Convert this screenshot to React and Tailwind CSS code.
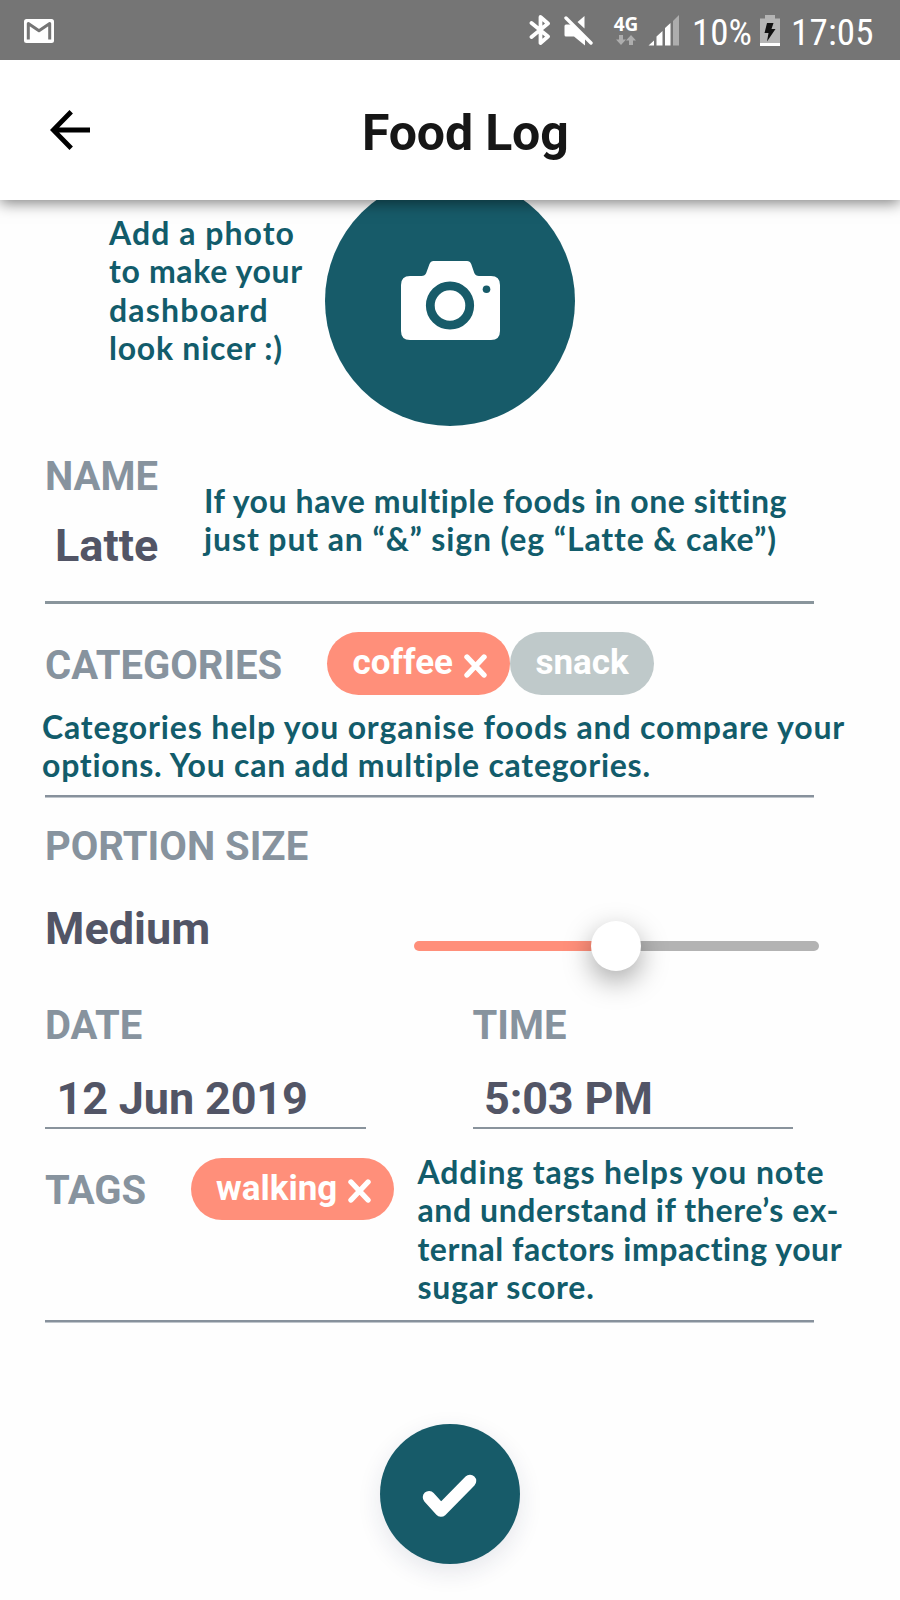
function GmailIcon() {
  return (
    <svg className="h-6 w-[30px] shrink-0" viewBox="0 0 30 24">
      <rect width="30" height="24" rx="2.5" fill="#fff" />
      <path d="M4.3 20.5V4.5L15 11.8L25.7 4.5V20.5" fill="none" stroke="#757575" strokeWidth="3" strokeLinejoin="round" />
    </svg>
  );
}

function BluetoothIcon() {
  return (
    <svg className="h-8 w-[22px] shrink-0" viewBox="0 0 22 32">
      <path d="M2.5 9L19 22.5L11.5 29V3L19 9.5L2.5 23" fill="none" stroke="#fff" strokeWidth="3.8" strokeLinecap="round" strokeLinejoin="round" />
    </svg>
  );
}

function MuteIcon() {
  return (
    <svg className="h-[31px] w-[29px] shrink-0" viewBox="0 0 29 31">
      <path d="M13.5 7L20.5 1V13.5Z" fill="#fff" />
      <path d="M2 3L27 28" stroke="#757575" strokeWidth="6" />
      <path d="M8 9.5L21 22.5V30.5L10 21.5H2Q0.5 21.5 0.5 20V11Q0.5 9.5 2 9.5Z" fill="#fff" />
      <path d="M2 3L27 28" stroke="#fff" strokeWidth="3.4" strokeLinecap="round" />
    </svg>
  );
}

function DataArrows() {
  return (
    <svg className="h-[10px] w-5" viewBox="0 0 20 10">
      <path d="M3 0H7V4.5H10L5 10L0 4.5H3ZM13 10H17V5.5H20L15 0L10 5.5H13Z" fill="#adadad" />
    </svg>
  );
}

function SignalIcon() {
  return (
    <svg className="h-[31px] w-8 shrink-0" viewBox="0 0 32 31">
      <path d="M0.5 30.5L6 25.5V30.5ZM8.5 30.5V21.5L14.5 16V30.5ZM17 30.5V13L22.5 8V30.5Z" fill="#fff" />
      <path d="M25 30.5V6L31 0V30.5Z" fill="#adadad" />
    </svg>
  );
}

function BatteryIcon() {
  return (
    <svg className="h-[31px] w-5 shrink-0" viewBox="0 0 20 31">
      <path d="M5 0H15V3.5H20V28H0V3.5H5Z" fill="#b4b4b4" />
      <path d="M0 28H20V31H0Z" fill="#fff" />
      <path d="M7 8H13.5L11.5 14H15.5L7 26.5L8.5 18H4.5Z" fill="#111" />
    </svg>
  );
}

function CameraIcon() {
  return (
    <svg className="h-[79px] w-[99px]" viewBox="0 0 99 79">
      <path
        d="M9 15H20.5Q24 15 25.2 12L28.5 3Q29.7 0 32.5 0H66Q69 0 70.2 3L73.3 12Q74.5 15 78 15H90Q99 15 99 24V70Q99 79 90 79H9Q0 79 0 70V24Q0 15 9 15Z"
        fill="#fff"
      />
      <circle cx="49" cy="44.5" r="19.7" fill="none" stroke="#175b69" strokeWidth="8.8" />
      <circle cx="85.5" cy="28.3" r="3.8" fill="#175b69" />
    </svg>
  );
}

function Label({ children, className = "" }) {
  return (
    <div className={"h-12 shrink-0 text-[40px] leading-[50px] font-bold whitespace-nowrap text-[#87939e] " + className}>
      {children}
    </div>
  );
}

function Value({ children, className = "" }) {
  return (
    <div className={"h-[52px] text-[45px] leading-[52px] font-bold whitespace-nowrap text-[#525566] " + className}>
      {children}
    </div>
  );
}

function Note({ lines, className = "" }) {
  return (
    <div className={"shrink-0 font-[Lato,sans-serif] text-[32px] leading-[38.3px] font-bold whitespace-nowrap text-[#125c6b] " + className}>
      {lines.map(([text, tracking]) => (
        <div key={text} className={tracking}>{text}</div>
      ))}
    </div>
  );
}

function Chip({ children, removable, className = "" }) {
  return (
    <div className={"flex h-[62.5px] shrink-0 items-center rounded-full pl-[25.5px] text-[35px] leading-[62px] font-bold whitespace-nowrap text-white " + className}>
      {children}
      {removable && (
        <svg className="mt-[5px] ml-[11px] h-6 w-[23px] shrink-0" viewBox="0 0 23 24">
          <path d="M3 3L20 21M20 3L3 21" stroke="#fff" strokeWidth="5.4" strokeLinecap="round" />
        </svg>
      )}
    </div>
  );
}

export default function App() {
  return (
    <div className="flex h-[1600px] w-[900px] flex-col overflow-hidden bg-[#fefefe] font-[Roboto,sans-serif]">
      <div className="relative z-20 flex h-[60px] shrink-0 items-center bg-[#757575] pr-[27px] pl-6 text-white">
        <div className="flex-1 pt-[2px]"><GmailIcon /></div>
        <BluetoothIcon />
        <div className="ml-[13px]"><MuteIcon /></div>
        <div className="ml-[20px] flex w-[26px] flex-col items-center">
          <div className="font-['Open_Sans',sans-serif] text-[19px] leading-[18px] font-bold">4G</div>
          <div className="mt-[2px] flex"><DataArrows /></div>
        </div>
        <div className="ml-[9px]"><SignalIcon /></div>
        <div className="ml-[12px] w-[60px] pt-[5px] font-['Roboto_Condensed',Roboto,sans-serif] text-[37px] leading-10">10%</div>
        <div className="ml-[8px]"><BatteryIcon /></div>
        <div className="ml-[11px] w-[82px] pt-[5px] font-['Roboto_Condensed',Roboto,sans-serif] text-[37px] leading-10 tracking-[0.2px]">17:05</div>
      </div>

      <header className="relative z-10 flex h-[140px] shrink-0 items-start bg-white shadow-[0_3px_14px_rgba(0,0,0,0.5)]">
        <svg className="mt-[50px] ml-[50px] h-10 w-10" viewBox="0 0 40 40">
          <path d="M40 20H4M21.2 1.8L3.3 20L21.2 38.2" fill="none" stroke="#000" strokeWidth="4.8" />
        </svg>
        <h1 className="mt-[43px] ml-[272px] text-[50px] leading-[60px] font-bold tracking-[-0.15px] text-[#161616]">Food Log</h1>
      </header>

      <main className="flex flex-col">
        <section className="flex h-[226px] items-start">
          <Note
            className="mt-[14.2px] ml-[109px] w-[216px]"
            lines={[
              ["Add a photo", "tracking-[1.05px]"],
              ["to make your", "tracking-[0.65px]"],
              ["dashboard", "tracking-[1.2px]"],
              ["look nicer :)", "tracking-[0.75px]"],
            ]}
          />
          <div className="-mt-[24.5px] flex size-[250px] items-center justify-center rounded-full bg-[#175b69]">
            <CameraIcon />
          </div>
        </section>

        <section className="ml-[45px] flex h-[178px] w-[769px] border-b-[3px] border-[#89959c]">
          <div className="w-[159px] pt-[26px]">
            <Label>NAME</Label>
            <Value className="mt-5 pl-[10px]">Latte</Value>
          </div>
          <Note
            className="mt-[55.8px]"
            lines={[
              ["If you have multiple foods in one sitting", "tracking-[0.6px]"],
              ["just put an “&” sign (eg “Latte & cake”)", "tracking-[0.88px]"],
            ]}
          />
        </section>

        <section className="ml-[45px] h-[193px] w-[769px] border-b-2 border-[#87919c] pt-[28px] shadow-[0_1px_0_#c0c6cc]">
          <div className="flex">
            <Label className="mt-[9px] w-[282px]">CATEGORIES</Label>
            <Chip removable className="w-[183px] bg-[#ff8f7a]">coffee</Chip>
            <Chip className="w-[143.5px] bg-[#bfc9ca]">snack</Chip>
          </div>
          <Note
            className="mt-[13.3px] -ml-[3px]"
            lines={[
              ["Categories help you organise foods and compare your", "tracking-[0.84px]"],
              ["options. You can add multiple categories.", "tracking-[0.75px]"],
            ]}
          />
        </section>

        <section className="ml-[45px] h-[204px] w-[774px] pt-[25px]">
          <Label>PORTION SIZE</Label>
          <div className="mt-[33px] flex items-start justify-between">
            <Value>Medium</Value>
            <div className="mt-[18px] flex h-[50px] w-[405px] items-center">
              <div className="h-[10px] w-[178px] shrink-0 rounded-l-full bg-[#ff8f7a]" />
              <div className="z-10 -mx-px size-[50px] shrink-0 rounded-full bg-white shadow-[0_10px_28px_rgba(0,0,0,0.35)]" />
              <div className="h-[10px] flex-1 rounded-r-full bg-[#b3b3b3]" />
            </div>
          </div>
        </section>

        <section className="ml-[45px] flex gap-[107px]">
          <div className="h-32 w-[320.5px] border-b-2 border-[#89939c]">
            <Label>DATE</Label>
            <Value className="mt-6 pl-[11.5px] tracking-[-0.15px]">12 Jun 2019</Value>
          </div>
          <div className="h-32 w-[320.5px] border-b-2 border-[#89939c]">
            <Label>TIME</Label>
            <Value className="mt-6 pl-[11.5px] tracking-[-0.15px]">5:03 PM</Value>
          </div>
        </section>

        <section className="ml-[45px] flex h-[193px] w-[769px] items-start border-b-2 border-[#87919c] pt-[28.5px] shadow-[0_1px_0_#c0c6cc]">
          <Label className="mt-[8.5px] w-[145.5px]">TAGS</Label>
          <Chip removable className="w-[203.5px] bg-[#ff8f7a]">walking</Chip>
          <Note
            className="-mt-[4.5px] ml-[23.5px]"
            lines={[
              ["Adding tags helps you note", "tracking-[0.89px]"],
              ["and understand if there’s ex-", "tracking-[0.58px]"],
              ["ternal factors impacting your", "tracking-[0.53px]"],
              ["sugar score.", "tracking-[0.75px]"],
            ]}
          />
        </section>

        <div className="mt-[101.5px] flex size-[140px] items-center justify-center self-center rounded-full bg-[#175b69] shadow-[0_8px_24px_rgba(23,40,80,0.11)]">
          <svg className="h-[140px] w-[140px]" viewBox="380 1423.5 140 140">
            <path d="M429 1496.7L441 1510L470 1480.5" fill="none" stroke="#fff" strokeWidth="12.5" strokeLinecap="round" strokeLinejoin="round" />
          </svg>
        </div>
      </main>
    </div>
  );
}
